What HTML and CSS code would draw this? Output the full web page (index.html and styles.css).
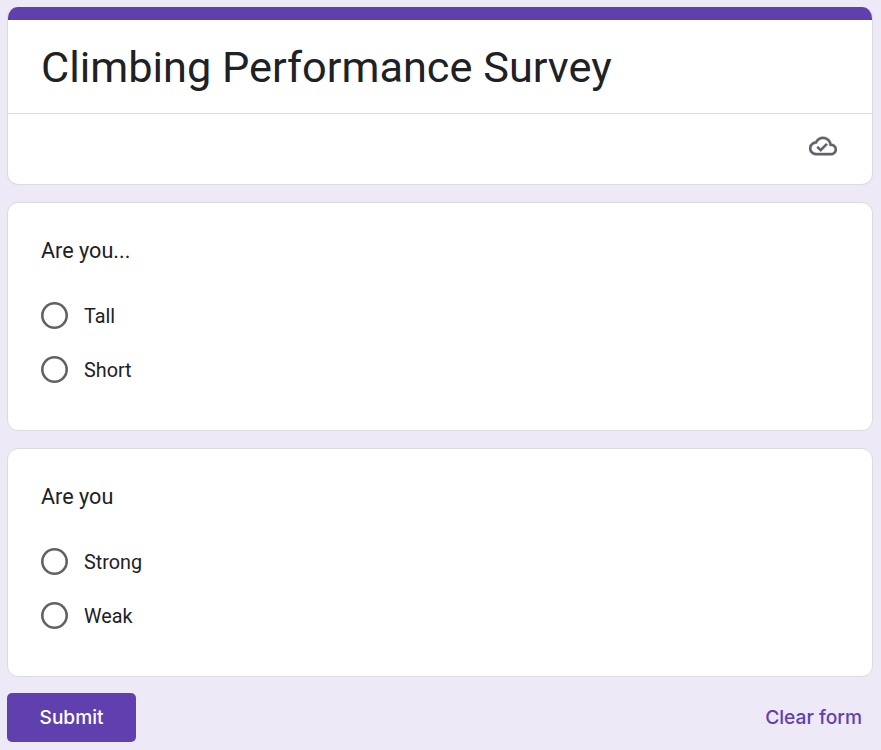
FILE: index.html
```html
<!DOCTYPE html>
<html lang="en">
<head>
<meta charset="utf-8">
<title>Climbing Performance Survey</title>
<link rel="stylesheet" href="styles.css">
</head>
<body>
<main class="form">
  <section class="card header-card">
    <div class="accent"></div>
    <h1 class="title">Climbing Performance Survey</h1>
    <div class="status">
      <svg class="cloud" viewBox="0 0 24 24" width="28" height="28" aria-hidden="true">
        <path d="M19.35 10.04C18.67 6.59 15.64 4 12 4 9.11 4 6.6 5.64 5.35 8.04 2.34 8.36 0 10.91 0 14c0 3.31 2.69 6 6 6h13c2.76 0 5-2.24 5-5 0-2.64-2.05-4.78-4.65-4.96zM19 18H6c-2.21 0-4-1.79-4-4 0-2.05 1.53-3.76 3.56-3.97l1.07-.11.5-.95C8.08 7.14 9.94 6 12 6c2.62 0 4.88 1.86 5.39 4.43l.3 1.5 1.53.11c1.56.1 2.78 1.41 2.78 2.96 0 1.65-1.35 3-3 3zm-9-3.82l-2.09-2.09L6.5 13.5 10 17l6.01-6.01-1.41-1.41z" fill="#5f6368" stroke="#5f6368" stroke-width="0.35"/>
      </svg>
    </div>
  </section>
  <section class="card question">
    <h2 class="prompt">Are you...</h2>
    <div class="options">
      <label class="option"><span class="radio"></span><span>Tall</span></label>
      <label class="option"><span class="radio"></span><span>Short</span></label>
    </div>
  </section>
  <section class="card question">
    <h2 class="prompt">Are you</h2>
    <div class="options">
      <label class="option"><span class="radio"></span><span>Strong</span></label>
      <label class="option"><span class="radio"></span><span>Weak</span></label>
    </div>
  </section>
  <div class="actions">
    <button class="submit" type="button">Submit</button>
    <button class="clear" type="button">Clear form</button>
  </div>
</main>
</body>
</html>
```
FILE: styles.css
```css
* { box-sizing: border-box; }
html, body { height: 100%; }
body {
  margin: 0;
  background: #ede9f7;
  font-family: Roboto, "Liberation Sans", sans-serif;
  color: #202124;
  overflow: hidden;
}
.form {
  display: flex;
  flex-direction: column;
  gap: 17px;
  padding: 7px 8px 0 7px;
}
.card {
  background: #fff;
  border: 1px solid #dadce0;
  border-radius: 11px;
  overflow: hidden;
}
.header-card {
  height: 178px;
  border-top: 0;
  display: flex;
  flex-direction: column;
}
.accent {
  height: 13px;
  background: #6040ae;
  margin: 0 -1px;
}
.title {
  margin: 0;
  height: 94px;
  padding: 22px 33px 0;
  font-size: 43.3px;
  line-height: 52px;
  font-weight: 400;
  border-bottom: 1px solid #dadce0;
}
.status {
  flex: 1;
  display: flex;
  justify-content: flex-end;
  align-items: center;
  padding: 0 35px 7px 0;
}
.question {
  height: 229px;
  padding: 33px 33px 0;
}
.prompt {
  margin: 0;
  font-size: 21.6px;
  line-height: 30px;
  font-weight: 400;
  color: #202124;
}
.options {
  display: flex;
  flex-direction: column;
  gap: 26px;
  margin-top: 36px;
}
.option {
  display: flex;
  align-items: center;
  gap: 16px;
  height: 28px;
  font-size: 19.8px;
}
.radio {
  align-self: flex-start;
  width: 27px;
  height: 27px;
  box-shadow: inset 0 0 0 2.6px #5f6368;
  border-radius: 50%;
}
.actions {
  display: flex;
  justify-content: space-between;
  align-items: center;
  margin-top: -1px;
}
.submit {
  width: 129px;
  height: 49px;
  border: 0;
  border-radius: 5px;
  background: #6040ae;
  color: #fff;
  padding: 0 0 2px;
  font: 500 19.1px Inter, sans-serif;
}
.clear {
  border: 0;
  background: none;
  padding: 0 11px 2px 0;
  color: #6040ae;
  font: 500 19.2px Inter, sans-serif;
}
```
